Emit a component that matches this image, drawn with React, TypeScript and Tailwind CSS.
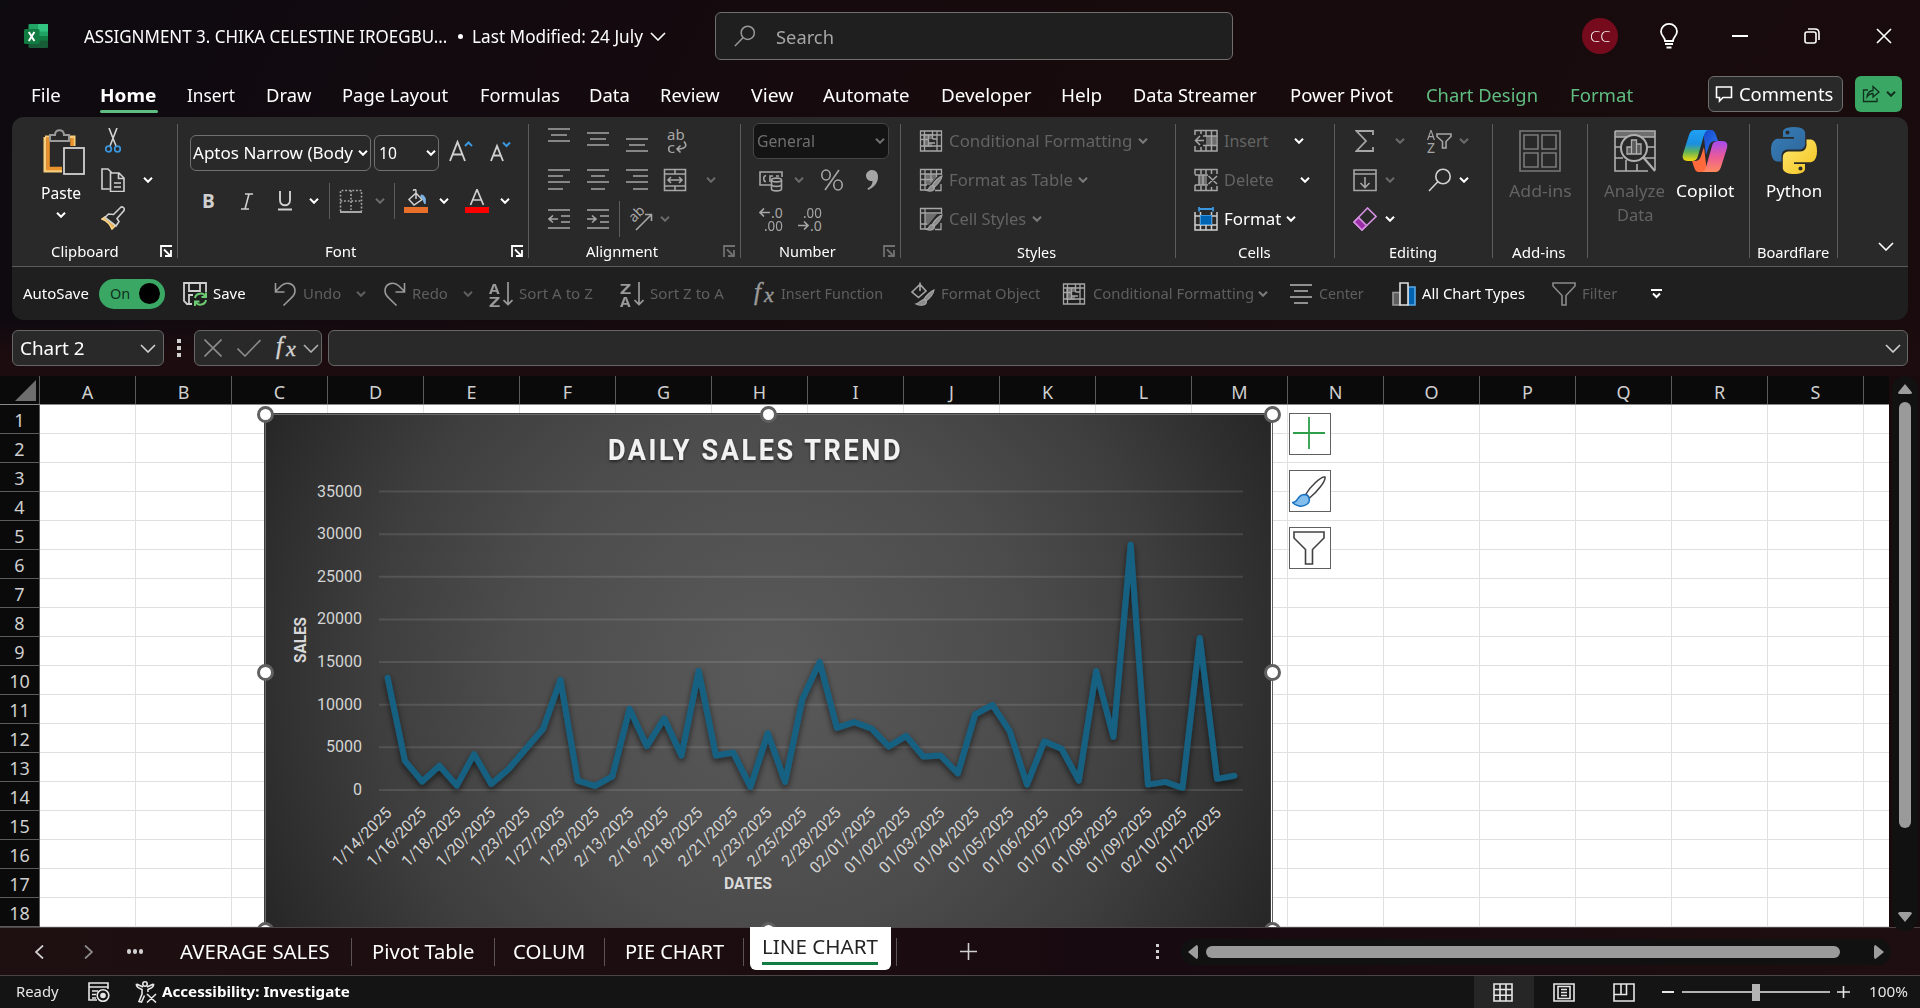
import { useLayoutEffect, useRef } from "react";
import type { ReactNode } from "react";

/* One line of text, squeezed or stretched horizontally to fill the width of its box. */
function Fit({ className = "", children }: { className?: string; children: ReactNode }) {
  const box = useRef<HTMLSpanElement>(null);
  const text = useRef<HTMLSpanElement>(null);
  useLayoutEffect(() => {
    if (!box.current || !text.current) return;
    const scale = box.current.clientWidth / text.current.offsetWidth;
    text.current.style.transform = `scaleX(${scale})`;
  }, []);
  return (
    <span ref={box} className={"block shrink-0 whitespace-nowrap " + className}>
      <span ref={text} className="inline-block origin-left">{children}</span>
    </span>
  );
}

function Svg({ className, vb = "0 0 24 24", children }: { className: string; vb?: string; children: ReactNode }) {
  return (
    <svg className={"block shrink-0 " + className} viewBox={vb} fill="none" stroke="currentColor" strokeWidth="1.6">
      {children}
    </svg>
  );
}

/* Small 10px drop-down arrow */
function Chev({ className = "" }: { className?: string }) {
  return (
    <svg className={"block h-[6px] w-[10px] shrink-0 " + className} viewBox="0 0 10 6" fill="none" stroke="currentColor" strokeWidth="2">
      <path d="M1 0.8 L5 4.8 L9 0.8" />
    </svg>
  );
}

/* Wide, thin arrow */
function BigChev({ className = "" }: { className?: string }) {
  return (
    <svg className={"block h-[9px] w-[16px] shrink-0 " + className} viewBox="0 0 16 9" fill="none" stroke="currentColor" strokeWidth="1.6">
      <path d="M1 1 L8 8 L15 1" />
    </svg>
  );
}

const Sep = () => <div className="mt-[7px] h-[134px] w-px shrink-0 bg-[#5c5c5c]" />;

function Launcher({ className }: { className: string }) {
  return (
    <Svg className={"h-[12px] w-[12px] " + className} vb="0 0 12 12">
      <path d="M1 12 V1 H12 M4 4.5 L10 10.5 M11 5 V11 H5" strokeWidth="1.8" />
    </Svg>
  );
}

/* ---------- icons ---------- */

const ExcelLogo = () => (
  <svg className="block h-6 w-6 shrink-0" viewBox="0 0 24 24">
    <rect x="4.5" y="0" width="10" height="8" rx="1" fill="#21a366" />
    <rect x="14" y="0" width="10" height="8" fill="#33c481" />
    <rect x="4.5" y="7" width="10" height="10" fill="#107c41" />
    <rect x="15" y="7.5" width="9" height="5" fill="#21a366" />
    <rect x="15" y="12" width="9" height="5" fill="#107c41" />
    <rect x="4.5" y="16.5" width="19.5" height="7.5" rx="1" fill="#185c37" />
    <rect x="0" y="5" width="15.5" height="15" rx="1.5" fill="#107c41" />
    <path d="M4.8 8 L10.4 17 M10.4 8 L4.8 17" stroke="#fff" strokeWidth="2" />
  </svg>
);

const CondIcon = ({ className = "" }: { className?: string }) => (
  <Svg className={"h-6 w-6 " + className}>
    <path d="M4 5 h10 v5 h-4 v4 h3 v4 h-9z" fill="#6e6e6e" stroke="none" />
    <path d="M1.5 2 H22.5 V22 H1.5z M1.5 6 H22.5 M1.5 10.5 H9 M1.5 17 H22.5 M5.5 2 V22 M9.5 6 V17 M13.5 2 V10 M18 2 V22 M13.5 10 H18 M9.5 14 H16" strokeWidth="1.3" />
  </Svg>
);
const TableIcon = ({ cell = false }: { cell?: boolean }) => (
  <Svg className="h-6 w-6">
    <path d={cell ? "M6 7 H18 L9 18 H6z" : "M6 6 H18 V9 L11 17 H6z"} fill="#6e6e6e" stroke="none" />
    <path d={cell ? "M22.5 7 V1.5 H1.5 V22 H9 M1.5 6 H22 M6 1.5 V22 M1.5 17 H8" : "M22.5 7 V1.5 H1.5 V22 H8 M1.5 6 H22 M6 1.5 V22 M1.5 11.5 H14 M1.5 17 H8 M12 2 V14 M17.5 2 V9"} strokeWidth="1.3" />
    <path d="M23 8 C20 9 15 14 13.5 17 L15.5 19 C19 16 22.5 11 23 8z M13 17.5 C10 17.5 11 21 7.5 22.5 C12 24 16 22.5 15.3 19.3z" fill="#8c8c8c" strokeWidth="1.2" />
    <path d="M22 16 V22.5 H16" strokeWidth="1.3" />
  </Svg>
);

const Lines = ({ rows, className }: { rows: [number, number, number][]; className: string }) => (
  <Svg className={"h-[26px] w-[22px] " + className} vb="0 0 22 26">
    {rows.map(([y, a, b]) => (
      <path key={y} d={`M${a} ${y} H${b}`} strokeWidth="1.7" />
    ))}
  </Svg>
);

const SortIcon = ({ a, b, className }: { a: string; b: string; className: string }) => (
  <div className={"flex h-6 w-6 shrink-0 text-[#9a9a9a] " + className}>
    <div className="flex w-[11px] flex-col text-[14px] font-bold leading-[13px]">
      <Fit className="w-[11px]">{a}</Fit>
      <Fit className="w-[11px]">{b}</Fit>
    </div>
    <Svg className="ml-[3px] h-6 w-[10px]" vb="0 0 10 24">
      <path d="M5 0 V22 M0.500 18 L5 22.500 L9.500 18" strokeWidth="1.7" />
    </Svg>
  </div>
);

const Fx = ({ className }: { className: string }) => (
  <svg className={"block h-[26px] w-[24px] shrink-0 overflow-visible " + className} viewBox="0 0 24 26" fill="currentColor" stroke="currentColor" strokeWidth="0.4">
    <text x="2" y="19" fontSize="25" fontStyle="italic" fontFamily="Liberation Serif">f</text>
    <text x="12" y="21" fontSize="22" fontStyle="italic" fontFamily="Liberation Serif">x</text>
  </svg>
);

const Mag = ({ className }: { className: string }) => (
  <Svg className={"h-6 w-6 " + className}>
    <circle cx="15" cy="8.5" r="7.2" />
    <path d="M9.8 13.8 L1 23" />
  </Svg>
);

/* ---------- title bar ---------- */

function TitleBar() {
  return (
    <div className="flex h-[72px] items-center text-[18px] text-white">
      <div className="ml-6"><ExcelLogo /></div>
      <Fit className="ml-9 w-[363px]">ASSIGNMENT 3. CHIKA CELESTINE IROEGBU...</Fit>
      <div className="ml-[11px] h-[5px] w-[5px] rounded-full bg-white" />
      <Fit className="ml-[9px] w-[171px]">Last Modified: 24 July</Fit>
      <BigChev className="ml-[7px]" />
      <div className="ml-[49px] flex h-[48px] w-[518px] shrink-0 items-center rounded-md border border-[#6f6f6f] bg-[#1f1f1f]">
        <Mag className="ml-[18px] h-[22px] w-[22px] text-[#9a9a9a]" />
        <Fit className="ml-[20px] mt-[2px] w-[58px] text-[#a6a6a6]">Search</Fit>
      </div>
      <div className="ml-[349px] flex h-9 w-9 items-center justify-center rounded-full bg-[#750b1c] font-['Open_Sans'] text-[14px] font-light">
        <Fit className="w-[20px]">CC</Fit>
      </div>
      <Svg className="ml-[42px] h-[26px] w-[18px]" vb="0 0 18 26">
        <path d="M5 18 C5 14 1 13 1 8.5 A8 7.6 0 0 1 17 8.5 C17 13 13 14 13 18z M5 21 H13 M6.5 24.5 H11.5" strokeWidth="1.8" />
      </Svg>
      <div className="ml-[54px] h-[2px] w-[16px] bg-white" />
      <Svg className="ml-[56px] h-4 w-4" vb="0 0 16 16">
        <rect x="1" y="4" width="11" height="11" rx="2" />
        <path d="M4 1 H11 Q15 1 15 5 V12" />
      </Svg>
      <Svg className="ml-[56px] h-4 w-4" vb="0 0 16 16">
        <path d="M1 1 L15 15 M15 1 L1 15" />
      </Svg>
    </div>
  );
}

function RibbonTabs() {
  return (
    <div className="flex h-[45px] items-center pb-[2px] text-[18px] leading-[36px] text-white">
      <Fit className="ml-[31px] mt-[3px] w-[30px]">File</Fit>
      <div className="ml-[39px] mt-[3px] flex h-[36px] w-[58px] shrink-0 flex-col">
        <Fit className="h-[33px] w-[56px] font-bold">Home</Fit>
        <div className="h-[3px] w-[58px] rounded bg-[#60bd82]" />
      </div>
      <Fit className="ml-[29px] mt-[3px] w-[48px]">Insert</Fit>
      <Fit className="ml-[31px] mt-[3px] w-[45px]">Draw</Fit>
      <Fit className="ml-[31px] mt-[3px] w-[106px]">Page Layout</Fit>
      <Fit className="ml-[32px] mt-[3px] w-[80px]">Formulas</Fit>
      <Fit className="ml-[29px] mt-[3px] w-[41px]">Data</Fit>
      <Fit className="ml-[30px] mt-[3px] w-[60px]">Review</Fit>
      <Fit className="ml-[31px] mt-[3px] w-[42px]">View</Fit>
      <Fit className="ml-[30px] mt-[3px] w-[87px]">Automate</Fit>
      <Fit className="ml-[31px] mt-[3px] w-[90px]">Developer</Fit>
      <Fit className="ml-[30px] mt-[3px] w-[41px]">Help</Fit>
      <Fit className="ml-[31px] mt-[3px] w-[124px]">Data Streamer</Fit>
      <Fit className="ml-[33px] mt-[3px] w-[103px]">Power Pivot</Fit>
      <Fit className="ml-[33px] mt-[3px] w-[112px] text-[#60bd82]">Chart Design</Fit>
      <Fit className="ml-[32px] mt-[3px] w-[63px] text-[#60bd82]">Format</Fit>
      <div className="ml-[75px] flex h-[36px] w-[135px] shrink-0 items-center rounded-md border border-[#6f6f6f] bg-[#292929]">
        <Svg className="ml-[6px] h-[18px] w-[18px]" vb="0 0 18 18">
          <path d="M1.5 2 H16.5 V12.5 H8 L4.5 16 V12.5 H1.5z" />
        </Svg>
        <Fit className="ml-[6px] w-[94px]">Comments</Fit>
      </div>
      <div className="ml-[12px] flex h-[36px] w-[47px] shrink-0 items-center rounded-md bg-[#3aa864] text-[#10301d]">
        <Svg className="ml-[7px] h-[18px] w-[18px]" vb="0 0 18 18">
          <path d="M6 5 H1.5 V16.5 H15 V13 M5 12 C5 8 8 5.5 11 5.5 V1.5 L17 7 L11 12 V8.5 C8 8.5 6.5 9.5 5 12z" strokeWidth="1.3" />
        </Svg>
        <Chev className="ml-[6px]" />
      </div>
    </div>
  );
}

/* ---------- ribbon groups ---------- */

const rowCls = "flex h-[39px] items-center";
const groupCls = "flex shrink-0 flex-col pt-[4px] text-[16px]";
const labelCls = "flex h-[26px] items-center text-[14px] text-white";

function ClipboardGroup() {
  return (
    <div className={groupCls + " w-[165px]"}>
      <div className="flex h-[117px]">
        <div className="ml-[28px] flex w-[42px] flex-col items-center text-white">
          <svg className="ml-[6px] mt-[8px] block h-[46px] w-[42px]" viewBox="0 0 42 46" fill="none">
            <path d="M2 8 H31 V17 M19 42 H2 V8" stroke="#f6ce7c" strokeWidth="3" />
            <path d="M5 8 V39.5 H19 M29 9 V17" stroke="#e8912d" strokeWidth="3.6" />
            <path d="M7 12 V6 H12 C12 -0.5 21 -0.5 21 6 H26 V12z" fill="#292929" stroke="#9a9a9a" strokeWidth="2" />
            <rect x="21" y="19" width="20" height="26" fill="#292929" stroke="#d0d0d0" strokeWidth="1.8" />
          </svg>
          <Fit className="mt-[6px] w-[40px] leading-6">Paste</Fit>
          <Chev className="mt-[7px]" />
        </div>
        <div className="ml-[19px] flex w-[60px] flex-col">
          <div className={rowCls}>
            <Svg className="ml-[4px] h-[25px] w-[16px]" vb="0 0 16 25">
              <path d="M4 0 L11 18 M12 0 L5 18" stroke="#d4d4d4" />
              <circle cx="3.5" cy="21" r="2.8" stroke="#3a96dd" strokeWidth="1.8" />
              <circle cx="12.5" cy="21" r="2.8" stroke="#3a96dd" strokeWidth="1.8" />
            </Svg>
          </div>
          <div className={rowCls}>
            <Svg className="h-6 w-6 text-[#d0d0d0]">
              <path d="M8.5 21 H1 V1 H7 L11 5 M9.5 5 H18 L23 10 V23.5 H9.5z M17.5 5 V10.5 H23 M13 15 H20 M13 19 H20" />
            </Svg>
            <Chev className="ml-[18px] text-white" />
          </div>
          <div className={rowCls + " -mt-px"}>
            <Svg className="h-6 w-6">
              <path d="M4 11 L1 13 C6 15 9 18 11 23 L16 18z" fill="#e8b04a" stroke="#f6d48c" />
              <path d="M7.5 8 L4 11.5 L15 20 L18 15.5 L16 12.5 L23 4.5 C24 2 21.5 0 19.5 1.5 L12.5 8.5z" fill="#292929" stroke="#d0d0d0" />
            </Svg>
          </div>
        </div>
      </div>
      <div className={labelCls}>
        <Fit className="ml-[39px] w-[68px]">Clipboard</Fit>
        <Launcher className="ml-[41px]" />
      </div>
    </div>
  );
}

function FontGroup() {
  return (
    <div className={groupCls + " w-[350px] text-[#d0d0d0]"}>
      <div className="mt-[14px] flex h-[36px] items-center text-[16.5px]">
        <div className="ml-[12px] flex h-[36px] w-[181px] items-center rounded-md border border-[#707070] text-white">
          <Fit className="ml-[2px] w-[160px]">Aptos Narrow (Body</Fit>
          <Chev className="ml-[5px]" />
        </div>
        <div className="ml-[3px] flex h-[36px] w-[65px] items-center rounded-md border border-[#707070] text-white">
          <Fit className="ml-[4px] w-[18px]">10</Fit>
          <Chev className="ml-[29px]" />
        </div>
        <Svg className="ml-[10px] h-[26px] w-[24px]" vb="0 0 24 26">
          <path d="M1 21 L8.5 2 L16 21 M3.7 14.500 H13.3" strokeWidth="1.9" />
          <path d="M16 6 L19.5 2.5 L23 6" stroke="#3a96dd" strokeWidth="2" />
        </Svg>
        <Svg className="ml-[17px] h-[26px] w-[24px]" vb="0 0 24 26">
          <path d="M1 21 L7 6 L13 21 M3.3 15.500 H10.7" strokeWidth="1.9" />
          <path d="M13 2.5 L16.500 6 L20 2.5" stroke="#3a96dd" strokeWidth="2" />
        </Svg>
      </div>
      <div className="mt-[12px] flex h-[36px] items-center">
        <span className="ml-[24px] w-[12px] font-['Open_Sans'] text-[19px] font-bold">B</span>
        <Svg className="ml-[27px] h-[17px] w-[12px]" vb="0 0 12 17">
          <path d="M4 1 H12 M0 16 H8 M8 1 L4 16" />
        </Svg>
        <Svg className="ml-[24px] h-[20px] w-[16px]" vb="0 0 16 20">
          <path d="M3 0 V9 C3 16 13 16 13 9 V0 M1 18.5 H15" strokeWidth="1.9" />
        </Svg>
        <Chev className="ml-[16px] text-white" />
        <div className="ml-[10px] h-[36px] w-px bg-[#5c5c5c]" />
        <Svg className="ml-[9px] h-6 w-6 text-[#a8a8a8]">
          <path d="M1.5 22 V1.5 H22.5 V22 M12 1.5 V21 M1.5 12 H22.5" strokeDasharray="1.8 1.8" />
          <path d="M1 23 H23" strokeWidth="2" />
        </Svg>
        <Chev className="ml-[12px] text-[#6a6a6a]" />
        <div className="ml-[9px] h-[36px] w-px bg-[#5c5c5c]" />
        <Svg className="ml-[9px] h-6 w-6">
          <path d="M5 10.5 L12 4 L18 10.5 L10 16z M12 10 V2 C12 0 9.5 0 9.5 2" strokeWidth="1.5" />
          <path d="M17 6 C21 6 22 10 21 15 C19 13 20 9 17 8z" fill="#7fb6ea" stroke="#7fb6ea" strokeWidth="1" />
          <rect x="0" y="18" width="24" height="6" fill="#e8702a" stroke="none" />
        </Svg>
        <Chev className="ml-[11px] text-white" />
        <Svg className="ml-[16px] h-6 w-6">
          <path d="M5.5 16 L12 0.5 L18.5 16 M7.8 11 H16.2" strokeWidth="1.7" />
          <rect x="0" y="18" width="24" height="6" fill="#ff0000" stroke="none" />
        </Svg>
        <Chev className="ml-[11px] text-white" />
      </div>
      <div className={labelCls + " mt-[19px]"}>
        <Fit className="ml-[147px] w-[31px]">Font</Fit>
        <Launcher className="ml-[155px]" />
      </div>
    </div>
  );
}

function AlignmentGroup() {
  return (
    <div className={groupCls + " w-[211px] text-[#a6a6a6]"}>
      <div className={rowCls}>
        <Lines className="ml-[19px]" rows={[[1, 0, 22], [7, 3, 19], [13, 0, 22]]} />
        <Lines className="ml-[17px]" rows={[[5, 0, 22], [11, 3, 19], [17, 0, 22]]} />
        <Lines className="ml-[17px]" rows={[[11, 0, 22], [17, 3, 19], [23, 0, 22]]} />
        <div className="ml-[19px] flex h-[26px] w-[20px] shrink-0 flex-col text-[15px] leading-[13px]">
          <Fit className="w-[18px]">ab</Fit>
          <div className="flex">
            <Fit className="w-[8px]">c</Fit>
            <Svg className="h-[13px] w-[12px]" vb="0 0 12 13">
              <path d="M9 0.500 C13 5 10 8 2 8 M5.500 4.500 L2 8 L5.500 11.500" />
            </Svg>
          </div>
        </div>
      </div>
      <div className={rowCls}>
        <Lines className="ml-[19px]" rows={[[3, 0, 22], [9, 0, 15], [15, 0, 22], [22, 0, 15]]} />
        <Lines className="ml-[17px]" rows={[[3, 0, 22], [9, 4, 18], [15, 0, 22], [22, 4, 18]]} />
        <Lines className="ml-[17px]" rows={[[3, 0, 22], [9, 7, 22], [15, 0, 22], [22, 7, 22]]} />
        <Svg className="ml-[15px] h-6 w-6">
          <path d="M1.5 1.5 H22.5 V22.5 H1.5z M1.5 6 H22.5 M1.5 18 H22.5 M12 1.5 V6 M12 18 V22.5 M5 12 H19 M8 9 L5 12 L8 15 M16 9 L19 12 L16 15" />
        </Svg>
        <Chev className="ml-[19px] text-[#6a6a6a]" />
      </div>
      <div className={rowCls}>
        <Svg className="ml-[19px] h-[26px] w-[22px]" vb="0 0 22 26">
          <path d="M0 4 H22 M13 10 H22 M13 16 H22 M0 22 H22 M10 13 H1 M5 9.5 L1 13 L5 16.5" />
        </Svg>
        <Svg className="ml-[17px] h-[26px] w-[22px]" vb="0 0 22 26">
          <path d="M0 4 H22 M13 10 H22 M13 16 H22 M0 22 H22 M0 13 H9 M5 9.5 L9 13 L5 16.5" />
        </Svg>
        <div className="ml-[10px] h-[36px] w-px bg-[#5c5c5c]" />
        <svg className="ml-[8px] block h-6 w-6 shrink-0 overflow-visible" viewBox="0 0 24 24" fill="none" stroke="currentColor" strokeWidth="1.6">
          <text transform="translate(6 16) rotate(-45)" x="0" y="0" fontSize="14" fontFamily="Noto Sans" fill="currentColor" stroke="none">ab</text>
          <path d="M8 23 L23 8 M17 7.5 H23.5 V14" />
        </svg>
        <Chev className="ml-[8px] text-[#6a6a6a]" />
      </div>
      <div className={labelCls}>
        <Fit className="ml-[57px] w-[72px]">Alignment</Fit>
        <Launcher className="ml-[65px] text-[#707070]" />
      </div>
    </div>
  );
}

function NumberGroup() {
  return (
    <div className={groupCls + " w-[159px] text-[#a6a6a6]"}>
      <div className={rowCls}>
        <div className="ml-[12px] flex h-[36px] w-[136px] items-center rounded-md border border-[#454545] bg-[#141414] text-[#6e6e6e]">
          <Fit className="ml-[3px] w-[58px]">General</Fit>
          <Chev className="ml-[60px]" />
        </div>
      </div>
      <div className={rowCls}>
        <Svg className="ml-[18px] h-6 w-6">
          <path d="M12 17 H1 V4 H23 V9 M7 8 C4 7 4 14 7 13.5 M11 14 V8 H14 M17 8 H20" />
          <path d="M12.5 12 C12.5 9.5 22.5 9.5 22.5 12 V21 C22.5 23.5 12.5 23.5 12.5 21z" fill="#292929" />
          <path d="M12.5 12 C12.5 14.5 22.5 14.5 22.5 12 M12.5 16.5 C12.5 19 22.5 19 22.5 16.5" />
        </Svg>
        <Chev className="ml-[11px] text-[#6a6a6a]" />
        <Svg className="ml-[16px] h-6 w-6">
          <ellipse cx="6" cy="7" rx="4.2" ry="5" />
          <ellipse cx="18" cy="17" rx="4.2" ry="5" />
          <path d="M19 2 L5 22" />
        </Svg>
        <Svg className="ml-[21px] h-[22px] w-[14px]" vb="0 0 14 22">
          <path d="M7 1 C11 1 13 4 13 8 C13 14 9 18.5 3 21 L2.5 19.5 C6 17.5 7.5 15 7.5 12 C4 12.5 1 10 1 6.5 C1 3.5 4 1 7 1z" fill="#a6a6a6" stroke="none" />
        </Svg>
      </div>
      <div className={rowCls}>
        <div className="ml-[18px] flex h-[26px] w-6 shrink-0 flex-col items-end text-[14px] leading-[13px]">
          <div className="flex h-[13px] items-center">
            <Svg className="mr-[1px] h-[9px] w-[11px]" vb="0 0 11 9"><path d="M11 4.500 H1 M5 0.500 L1 4.500 L5 8.500" /></Svg>
            <Fit className="w-[12px]">.0</Fit>
          </div>
          <Fit className="w-[19px]">.00</Fit>
        </div>
        <div className="ml-[15px] flex h-[26px] w-6 shrink-0 flex-col items-end text-[14px] leading-[13px]">
          <Fit className="w-[19px]">.00</Fit>
          <div className="flex h-[13px] items-center">
            <Svg className="mr-[1px] h-[9px] w-[11px]" vb="0 0 11 9"><path d="M0 4.500 H10 M6 0.500 L10 4.500 L6 8.500" /></Svg>
            <Fit className="w-[12px]">.0</Fit>
          </div>
        </div>
      </div>
      <div className={labelCls}>
        <Fit className="ml-[38px] w-[57px]">Number</Fit>
        <Launcher className="ml-[47px] text-[#707070]" />
      </div>
    </div>
  );
}

function StylesGroup() {
  return (
    <div className={groupCls + " w-[274px] text-[#a6a6a6]"}>
      <div className={rowCls}>
        <CondIcon className="ml-[18px]" />
        <Fit className="ml-[6px] w-[183px] text-[#636363]">Conditional Formatting</Fit>
        <Chev className="ml-[6px] text-[#7a7a7a]" />
      </div>
      <div className={rowCls}>
        <div className="ml-[18px]"><TableIcon /></div>
        <Fit className="ml-[6px] w-[124px] text-[#636363]">Format as Table</Fit>
        <Chev className="ml-[5px] text-[#7a7a7a]" />
      </div>
      <div className={rowCls}>
        <div className="ml-[18px]"><TableIcon cell /></div>
        <Fit className="ml-[6px] w-[77px] text-[#636363]">Cell Styles</Fit>
        <Chev className="ml-[6px] text-[#7a7a7a]" />
      </div>
      <div className={labelCls + " pt-[2px]"}>
        <Fit className="ml-[116px] w-[39px]">Styles</Fit>
      </div>
    </div>
  );
}

function CellsGroup() {
  return (
    <div className={groupCls + " w-[158px] text-[#a6a6a6]"}>
      <div className={rowCls}>
        <Svg className="ml-[18px] h-6 w-6">
          <rect x="12" y="7" width="10" height="9" fill="#6e6e6e" stroke="none" />
          <path d="M1 6 V1.5 H23 V22 H1 V17 M7 1.5 V5 M12 1.5 V7 M17.5 1.5 V22 M9 7 H23 M9 16.5 H23 M7 18 V22 M12 16 V22 M10 11.5 H1.5 M6 7 L1.5 11.5 L6 16" strokeWidth="1.5" />
        </Svg>
        <Fit className="ml-[6px] w-[44px] text-[#636363]">Insert</Fit>
        <Chev className="ml-[26px] text-white" />
      </div>
      <div className={rowCls}>
        <Svg className="ml-[18px] h-6 w-6">
          <rect x="5" y="7" width="8" height="10" fill="#6e6e6e" stroke="none" />
          <path d="M1 6.5 V1.5 H23 V6 M7 1.5 V6 M12 1.5 V6 M17.5 1.5 V6 M1 7 H14 M1 17 H14 M5 7 V17 M9 7 V17 M1 17 V22.5 H23 V18 M7 18 V22 M12 18 V22 M17.5 19 V22 M14.5 8 L23 16 M23 8 L14.5 16" strokeWidth="1.5" />
        </Svg>
        <Fit className="ml-[6px] w-[50px] text-[#636363]">Delete</Fit>
        <Chev className="ml-[26px] text-white" />
      </div>
      <div className={rowCls}>
        <Svg className="ml-[18px] h-6 w-6 text-[#d0d0d0]">
          <path d="M1 5 V23 H23 V5 M1 9 H23 M1 18 H23 M6.5 5 V23 M17.5 5 V23 M12 18 V23" strokeWidth="1.5" />
          <rect x="6.5" y="8.5" width="11" height="9" fill="#0063b1" stroke="#3a96dd" strokeWidth="1" />
          <path d="M5 2 H19 M5 0 V4.5 M19 0 V4.5" stroke="#3a96dd" strokeWidth="1.8" />
        </Svg>
        <Fit className="ml-[6px] w-[57px] text-white">Format</Fit>
        <Chev className="ml-[5px] text-white" />
      </div>
      <div className={labelCls + " pt-[2px]"}>
        <Fit className="ml-[62px] w-[33px]">Cells</Fit>
      </div>
    </div>
  );
}

function EditingGroup() {
  return (
    <div className={groupCls + " w-[157px] text-[#a6a6a6]"}>
      <div className={rowCls}>
        <Svg className="ml-[20px] h-[22px] w-[20px]" vb="0 0 20 22">
          <path d="M18 5 V1 H1.5 L11 11 L1.5 21 H18 V17" strokeWidth="1.8" />
        </Svg>
        <Chev className="ml-[20px] text-[#6a6a6a]" />
        <div className="ml-[22px] flex h-[26px] w-[9px] shrink-0 flex-col text-[14px] leading-[13px]">
          <Fit className="w-[8px]">A</Fit>
          <Fit className="w-[8px]">Z</Fit>
        </div>
        <Svg className="h-[16px] w-[16px]" vb="0 0 16 16">
          <path d="M1 1 H15 V3.500 L10 8.500 V15 H6.500 V8.500 L1 3.500z" />
        </Svg>
        <Chev className="ml-[7px] text-[#6a6a6a]" />
      </div>
      <div className={rowCls}>
        <Svg className="ml-[18px] h-6 w-6">
          <path d="M1 2 H23 V22.5 H1z M1 6 H23 M12 9 V19 M7.5 15 L12 19.5 L16.5 15" />
        </Svg>
        <Chev className="ml-[8px] text-[#6a6a6a]" />
        <Mag className="ml-[33px] text-[#d0d0d0]" />
        <Chev className="ml-[7px] text-white" />
      </div>
      <div className={rowCls}>
        <Svg className="ml-[18px] h-6 w-6 text-[#d48fe0]">
          <path d="M1 15 L14.5 1 L23 9.5 L9 23z" />
          <path d="M1 15 L5.5 10.5 L13.5 18.5 L9 23z" fill="#9b2fa8" />
        </Svg>
        <Chev className="ml-[8px] text-white" />
      </div>
      <div className={labelCls + " pt-[2px]"}>
        <Fit className="ml-[54px] w-[48px]">Editing</Fit>
      </div>
    </div>
  );
}

const CopilotIcon = () => (
  <svg className="block h-[44px] w-[46px]" viewBox="0 0 46 44">
    <defs>
      <linearGradient id="cpA" x1="0" y1="0" x2="0" y2="1">
        <stop offset="0" stopColor="#1fa2f5" /><stop offset=".45" stopColor="#1b8fe0" /><stop offset=".7" stopColor="#5fb35a" /><stop offset="1" stopColor="#f5d90a" />
      </linearGradient>
      <linearGradient id="cpB" x1="0" y1="0" x2="0" y2="1">
        <stop offset="0" stopColor="#a44bf0" /><stop offset=".5" stopColor="#ea5a9a" /><stop offset="1" stopColor="#ff8a5c" />
      </linearGradient>
      <linearGradient id="cpC" x1="0" y1="0" x2="1" y2="1">
        <stop offset="0" stopColor="#1746c9" /><stop offset="1" stopColor="#2b7cf0" />
      </linearGradient>
    </defs>
    <path d="M21 1 H29 C32 1 33 3 34 6 L36 12 C31 12 29 12 27 17 L24 26z" fill="url(#cpC)" />
    <path d="M25 43 H17 C14 43 13 41 12 38 L10 32 C15 32 17 32 19 27 L22 18z" fill="#ff6a3d" />
    <path d="M13 1 H27 C24 1 23 3 22 6 L16 27 C15 31 13 32 9 32 H6 C1 32 0 29 1 25 L7 6 C8.500 2 10 1 13 1z" fill="url(#cpA)" />
    <path d="M33 43 H19 C22 43 23 41 24 38 L30 17 C31 13 33 12 37 12 H40 C45 12 46 15 45 19 L39 38 C37.500 42 36 43 33 43z" fill="url(#cpB)" />
  </svg>
);

const PythonIcon = () => (
  <svg className="block h-[47px] w-[46px]" viewBox="0 0 46 47">
    <defs>
      <linearGradient id="pyB" x1="0" y1="0" x2="1" y2="1"><stop offset="0" stopColor="#387eb8" /><stop offset="1" stopColor="#2d659a" /></linearGradient>
      <linearGradient id="pyY" x1="0" y1="0" x2="1" y2="1"><stop offset="0" stopColor="#ffe873" /><stop offset="1" stopColor="#f3c31c" /></linearGradient>
    </defs>
    <path d="M22.700 0 C11.500 0 12 5 12 5 V10 H23 V11.700 H7.500 C7.500 11.700 0 10.800 0 23 C0 35 6.500 34.500 6.500 34.500 H10.500 V29 C10.500 29 10.300 22.500 17 22.500 H28 C28 22.500 34.200 22.600 34.200 16.500 V6.500 C34.200 6.500 35.200 0 22.700 0z M16.500 3.500 A2 2 0 1 1 16.500 7.600 A2 2 0 1 1 16.500 3.500z" fill="url(#pyB)" fillRule="evenodd" />
    <path d="M23.300 47 C34.500 47 34 42 34 42 V37 H23 V35.300 H38.500 C38.500 35.300 46 36.200 46 24 C46 12 39.500 12.500 39.500 12.500 H35.500 V18 C35.500 18 35.700 24.500 29 24.500 H18 C18 24.500 11.800 24.400 11.800 30.500 V40.500 C11.800 40.500 10.800 47 23.300 47z M29.500 43.500 A2 2 0 1 1 29.500 39.400 A2 2 0 1 1 29.500 43.500z" fill="url(#pyY)" fillRule="evenodd" />
  </svg>
);

function RightGroups() {
  return (
    <>
      <div className={groupCls + " w-[94px] text-[#636363]"}>
        <div className="flex h-[117px] flex-col items-center">
          <Svg className="mt-[9px] h-[42px] w-[42px] text-[#7a7a7a]" vb="0 0 42 42">
            <path d="M1 1 H41 V41 H1z M5 5 H19 V19 H5z M23 5 H37 V19 H23z M5 23 H19 V37 H5z M23 23 H37 V37 H23z" />
          </Svg>
          <Fit className="mt-[7px] w-[63px] leading-6">Add-ins</Fit>
        </div>
        <div className={labelCls + " pt-[2px]"}><Fit className="ml-[19px] w-[54px]">Add-ins</Fit></div>
      </div>
      <Sep />
      <div className={groupCls + " w-[161px] text-[#636363]"}>
        <div className="flex h-[117px]">
          <div className="ml-[16px] flex w-[61px] flex-col items-center">
            <Svg className="mt-[9px] h-[42px] w-[42px] text-[#b0b0b0]" vb="0 0 42 42">
              <path d="M1 1 H41 V7 H1z" fill="#6e6e6e" stroke="none" />
              <path d="M1 1 H41 V40 M1 1 V41 H34 M1 7 H41 M1 17 H7 M33 17 H41 M1 28 H9 M31 28 H41 M12 30 V41 M23 34 V41" />
              <circle cx="20" cy="18" r="13" fill="#292929" strokeWidth="2" />
              <path d="M13 24 V17 H17.500 V24z M17.500 24 V10 H22.500 V24z M22.500 24 V14 H27 V24z" fill="#5a5a5a" strokeWidth="1.300" />
              <path d="M29 27 L41 41" strokeWidth="2.200" />
            </Svg>
            <Fit className="mt-[7px] w-[61px] leading-6">Analyze</Fit>
            <Fit className="w-[36px] leading-6">Data</Fit>
          </div>
          <div className="ml-[11px] flex w-[58px] flex-col items-center text-white">
            <div className="mt-[8px]"><CopilotIcon /></div>
            <Fit className="mt-[6px] w-[58px] leading-6">Copilot</Fit>
          </div>
        </div>
      </div>
      <Sep />
      <div className={groupCls + " w-[87px] text-white"}>
        <div className="flex h-[117px] flex-col items-center">
          <div className="mt-[6px]"><PythonIcon /></div>
          <Fit className="mt-[5px] w-[56px] leading-6">Python</Fit>
        </div>
        <div className={labelCls + " pt-[2px]"}><Fit className="ml-[7px] w-[72px]">Boardflare</Fit></div>
      </div>
      <Sep />
      <BigChev className="ml-[40px] mt-[125px] text-white" />
    </>
  );
}

/* ---------- quick access toolbar ---------- */

function QuickAccess() {
  return (
    <div className="flex h-[53px] items-center text-[14.5px] text-[#5f5f5f]">
      <Fit className="ml-[11px] w-[66px] text-white">AutoSave</Fit>
      <div className="ml-[10px] flex h-[30px] w-[66px] shrink-0 items-center rounded-full bg-[#3aa864] text-[#10301d]">
        <Fit className="ml-[11px] w-[20px]">On</Fit>
        <div className="ml-[9px] h-[21px] w-[21px] rounded-full bg-black" />
      </div>
      <Svg className="ml-[18px] mt-px h-6 w-6 text-[#d0d0d0]">
        <path d="M9 22 H4 L1 19 V1 H23 V10 M6 1 V9 H17 V1 M6 21 V13 H10" strokeWidth="1.8" />
        <path d="M12 16 C13 11 20 10 22.500 14.500 M23 10.500 V15 H18.500 M23 18 C22 23.500 15 24 12.500 20 M12 24 V19.500 H16.500" stroke="#6ccb72" strokeWidth="2" />
      </Svg>
      <Fit className="ml-[6px] w-[33px] text-white">Save</Fit>
      <Svg className="ml-[28px] h-6 w-[23px] text-[#9a9a9a]" vb="0 0 23 24">
        <path d="M1.500 1 V10 H10.500 M1.500 9.500 L7 4 C12 -1 21 1 21 9 C21 13 19 14.500 9.500 23.500" />
      </Svg>
      <Fit className="ml-[6px] w-[38px]">Undo</Fit>
      <Chev className="ml-[15px]" />
      <Svg className="ml-[17px] h-6 w-[23px] text-[#9a9a9a]" vb="0 0 23 24">
        <path d="M21.500 1 V10 H12.500 M21.500 9.500 L16 4 C11 -1 2 1 2 9 C2 13 4 14.500 13.500 23.500" />
      </Svg>
      <Fit className="ml-[6px] w-[36px]">Redo</Fit>
      <Chev className="ml-[15px]" />
      <SortIcon a="A" b="Z" className="ml-[16px]" />
      <Fit className="ml-[6px] w-[74px]">Sort A to Z</Fit>
      <SortIcon a="Z" b="A" className="ml-[27px]" />
      <Fit className="ml-[6px] w-[74px]">Sort Z to A</Fit>
      <Fx className="ml-[28px] text-[#9a9a9a]" />
      <Fit className="ml-[5px] w-[102px]">Insert Function</Fit>
      <Svg className="ml-[28px] h-6 w-6 text-[#a6a6a6]">
        <path d="M1 10 L9 2.500 L15 9 L7.500 15.500z M9 9 V0.500" />
        <path d="M23 8 C20 9 15 14 13 17 L15 19 C19 16 22.500 11 23 8z M13 17.500 C10 17.500 9 21 5 22 C10 24.500 16 23 15.300 19.300z" fill="#8c8c8c" strokeWidth="1.200" />
      </Svg>
      <Fit className="ml-[6px] w-[99px]">Format Object</Fit>
      <CondIcon className="ml-[22px] text-[#a6a6a6]" />
      <Fit className="ml-[7px] w-[161px]">Conditional Formatting</Fit>
      <Chev className="ml-[4px] text-[#7a7a7a]" />
      <Lines className="ml-[22px] text-[#a6a6a6]" rows={[[4, 0, 22], [10, 4, 18], [16, 0, 22], [22, 4, 18]]} />
      <Fit className="ml-[7px] w-[45px]">Center</Fit>
      <Svg className="ml-[28px] h-6 w-6">
        <path d="M1 10.500 H8 V23 H1z" fill="#5f5f5f" stroke="#9a9a9a" />
        <path d="M16 5 H23 V23 H16z" fill="#0063b1" stroke="#5aa9e6" />
        <path d="M8 1 H16 V23 H8z" fill="#1f1f1f" stroke="#e0e0e0" />
      </Svg>
      <Fit className="ml-[6px] w-[103px] text-white">All Chart Types</Fit>
      <Svg className="ml-[27px] h-6 w-6 text-[#8a8a8a]">
        <path d="M1 1 H23 V4 L14 13.500 V23 H10 V13.500 L1 4z" />
      </Svg>
      <Fit className="ml-[6px] w-[35px]">Filter</Fit>
      <Svg className="ml-[34px] h-[10px] w-[11px] text-white" vb="0 0 11 10">
        <path d="M0 1 H11 M2 4.500 L5.500 8 L9 4.500" strokeWidth="2" />
      </Svg>
    </div>
  );
}

function FormulaBar() {
  return (
    <div className="flex h-[56px] items-center bg-[linear-gradient(180deg,transparent,#1c0c0f_60%)] text-[18px] text-white">
      <div className="ml-3 flex h-[36px] w-[152px] shrink-0 items-center rounded-md border border-[#666] bg-[#292929]">
        <Fit className="ml-[7px] mt-px w-[65px]">Chart 2</Fit>
        <BigChev className="ml-[55px] text-[#d0d0d0]" />
      </div>
      <div className="ml-[13px] flex w-[4px] flex-col gap-[3px]">
        <div className="h-[4px] w-[4px] bg-[#d0d0d0]" /><div className="h-[4px] w-[4px] bg-[#d0d0d0]" /><div className="h-[4px] w-[4px] bg-[#d0d0d0]" />
      </div>
      <div className="ml-[13px] flex h-[36px] w-[128px] shrink-0 items-center rounded-md border border-[#666] bg-[#292929]">
        <Svg className="ml-[9px] h-[18px] w-[18px] text-[#8a8a8a]" vb="0 0 18 18"><path d="M0.500 0.500 L17.500 17.500 M17.500 0.500 L0.500 17.500" /></Svg>
        <Svg className="ml-[15px] h-[18px] w-[24px] text-[#8a8a8a]" vb="0 0 24 18"><path d="M0.500 9.500 L8 17 L23.500 1" /></Svg>
        <Fx className="ml-[13px] text-[#d0d0d0]" />
        <BigChev className="ml-[5px] text-[#b0b0b0]" />
      </div>
      <div className="ml-[6px] flex h-[36px] w-[1580px] shrink-0 items-center justify-end rounded-md border border-[#666] bg-[#292929] pr-[6px]">
        <BigChev className="text-[#d0d0d0]" />
      </div>
    </div>
  );
}

/* ---------- chart ---------- */

const SALES = [
  13160, 3409, 991, 2854, 515, 4202, 713, 2458, 4836, 7174, 12922, 1110, 476, 1586, 9513, 5153, 8403, 4043, 13952, 4043, 4400, 357, 6659, 951, 10663,
  15023, 7293, 7967, 7214, 5113, 6342, 3924, 4043, 1942, 8879, 9989, 6897, 634, 5708, 4836, 1110, 13952, 6223, 28777, 634, 951, 238, 17837, 1308, 1665,
];

const DATES = [
  "1/14/2025", "1/16/2025", "1/18/2025", "1/20/2025", "1/23/2025", "1/27/2025", "1/29/2025", "2/13/2025", "2/16/2025", "2/18/2025",
  "2/21/2025", "2/23/2025", "2/25/2025", "2/28/2025", "02/01/2025", "01/02/2025", "01/03/2025", "01/04/2025", "01/05/2025", "01/06/2025",
  "01/07/2025", "01/08/2025", "01/09/2025", "02/10/2025", "01/12/2025",
];

function SalesChart() {
  const x = (i: number) => 114 + 17.28 * (i + 0.5);
  const y = (v: number) => 377 - (v / 35000) * 298.4;
  const points = SALES.map((v, i) => `${x(i)},${y(v)}`).join(" ");
  return (
    <svg className="block h-[517px] w-[1007px]" viewBox="-1 0 1007 517" fontFamily="Roboto, sans-serif">
      <defs>
        <radialGradient id="chartBg" gradientUnits="userSpaceOnUse" cx="503" cy="258" r="565">
          <stop offset="0" stopColor="#5a5a5a" />
          <stop offset="0.450" stopColor="#4c4c4c" />
          <stop offset="0.700" stopColor="#3e3e3e" />
          <stop offset="1" stopColor="#262626" />
        </radialGradient>
        <filter id="lineShadow" x="-5%" y="-10%" width="110%" height="125%">
          <feDropShadow dx="0" dy="3" stdDeviation="3" floodColor="#000" floodOpacity="0.600" />
        </filter>
        <filter id="titleShadow" x="-5%" y="-20%" width="110%" height="150%">
          <feDropShadow dx="0" dy="2" stdDeviation="1.500" floodColor="#000" floodOpacity="0.500" />
        </filter>
      </defs>
      <rect x="-1" width="1007" height="517" fill="url(#chartBg)" />
      <rect x="-0.500" y="0.500" width="1006" height="516" fill="none" stroke="#3c3c3c" />
      <path d="M0 1.500 H1005 M0.500 1 V517" stroke="#6a6a6a" fill="none" />
      <text transform="translate(343 47) scale(0.900 1)" x="0" y="0" fontSize="30" fontWeight="700" fill="#f2f2f2" textLength="325" filter="url(#titleShadow)">DAILY SALES TREND</text>
      {[0, 5000, 10000, 15000, 20000, 25000, 30000, 35000].map((v) => (
        <g key={v}>
          <path d={`M114 ${y(v)} H978`} stroke="#fff" strokeOpacity="0.110" strokeWidth="2" />
          <text x="97" y={y(v) + 5} fontSize="16" fill="#d4d4d4" textAnchor="end">{v}</text>
        </g>
      ))}
      <polyline points={points} fill="none" stroke="#156082" strokeWidth="6" strokeLinecap="round" strokeLinejoin="round" filter="url(#lineShadow)" />
      {DATES.map((d, i) => (
        <text key={d + i} transform={`translate(${x(i * 2) + 5} ${401}) rotate(-45)`} fontSize="16" fill="#d4d4d4" textAnchor="end">{d}</text>
      ))}
      <text x="459" y="476" fontSize="16" fontWeight="700" fill="#d9d9d9" textLength="48" lengthAdjust="spacingAndGlyphs">DATES</text>
      <text transform="translate(41 250) rotate(-90)" fontSize="16" fontWeight="700" fill="#d9d9d9" textLength="46" lengthAdjust="spacingAndGlyphs">SALES</text>
    </svg>
  );
}

const handleCls = "absolute h-[17px] w-[17px] rounded-full border-[3.5px] border-[#606060] bg-white ";

/* ---------- sheet ---------- */

const COLS = [..."ABCDEFGHIJLKMNOPQRS"].sort();
const ROWS = Array.from({ length: 18 }, (_, i) => i + 1);

function Sheet() {
  return (
    <div className="flex h-[551px] bg-[#190b0d]">
      <div className="w-[1889px] shrink-0 bg-[#0a0a0a] text-[18px] text-[#cfcfcf]">
        <div className="flex h-[29px] border-b border-[#8a8a8a]">
          <div className="flex w-[40px] shrink-0 items-end justify-end border-r border-[#5c5c5c] pb-[3px] pr-[3px]">
            <Svg className="h-[21px] w-[21px]" vb="0 0 21 21"><path d="M21 0 V21 H0z" fill="#6e6e6e" stroke="none" /></Svg>
          </div>
          {COLS.map((c) => (
            <div key={c} className="flex w-[96px] shrink-0 items-center justify-center border-r border-[#5c5c5c] pt-[4px]">{c}</div>
          ))}
        </div>
        <div className="relative h-[522px] overflow-hidden">
          {ROWS.map((r) => (
            <div key={r} className="flex h-[29px]">
              <div className="flex w-[40px] shrink-0 items-center justify-center border-b border-r border-[#5c5c5c] pt-[2px]">{r}</div>
              {COLS.map((c) => (
                <div key={c} className="w-[96px] shrink-0 border-b border-r border-[#e0e0e0] bg-white" />
              ))}
              <div className="grow border-b border-[#e0e0e0] bg-white" />
            </div>
          ))}
          <div className="absolute left-[264px] top-[8px] w-[1009px] border-r border-[#606060] bg-white">
            <SalesChart />
            <div className={handleCls + "-left-[7px] -top-[7px]"} />
            <div className={handleCls + "left-[496px] -top-[7px]"} />
            <div className={handleCls + "left-[1000px] -top-[7px]"} />
            <div className={handleCls + "-left-[7px] top-[251px]"} />
            <div className={handleCls + "left-[1000px] top-[251px]"} />
            <div className={handleCls + "-left-[7px] top-[509px]"} />
            <div className={handleCls + "left-[496px] top-[509px]"} />
            <div className={handleCls + "left-[1000px] top-[509px]"} />
          </div>
          <div className="absolute left-[1289px] top-[8px] flex flex-col gap-[15px] text-[#404040]">
            <div className="flex h-[42px] w-[42px] border border-[#606060] bg-white">
              <Svg className="ml-[3px] mt-[3px] h-[32px] w-[32px]" vb="0 0 32 32">
                <path d="M0 16 H32 M16 0 V32" stroke="#2e9e4a" strokeWidth="1.800" />
              </Svg>
            </div>
            <div className="flex h-[42px] w-[42px] border border-[#606060] bg-white">
              <Svg className="ml-[2px] mt-[5px] h-[31px] w-[34px]" vb="0 0 34 31">
                <path d="M33 1 C29 0 18 11 14 18 L17.500 22 C25 16 34 5 33 1z" strokeWidth="1.500" />
                <path d="M17 22 C19 27 13 31 7 30 C4 29.500 2 28.500 0.500 26.500 C6 27 5 19 12 18.500 C14.500 18.500 16.500 20 17 22z" fill="#83beec" stroke="#1a73c2" strokeWidth="1.500" />
              </Svg>
            </div>
            <div className="flex h-[42px] w-[42px] border border-[#606060] bg-white">
              <Svg className="ml-[3px] mt-[3px] h-[34px] w-[32px]" vb="0 0 32 34">
                <path d="M1 1 H31 V7 L19.500 18.500 V33 H12.500 V18.500 L1 7z" fill="#fafafa" />
              </Svg>
            </div>
          </div>
        </div>
      </div>
      <div className="ml-[3px] flex h-[555px] w-[26px] shrink-0 flex-col items-center rounded-full bg-[#111111]">
        <Svg className="mt-[8px] h-[10px] w-[14px]" vb="0 0 14 10"><path d="M7 0 L14 8.500 Q14 10 12 10 H2 Q0 10 0 8.500z" fill="#9d9d9d" stroke="none" /></Svg>
        <div className="mt-[8px] h-[426px] w-[12px] rounded-full bg-[#9a9a9a]" />
        <Svg className="mt-[84px] h-[10px] w-[14px]" vb="0 0 14 10"><path d="M7 10 L14 1.500 Q14 0 12 0 H2 Q0 0 0 1.500z" fill="#9d9d9d" stroke="none" /></Svg>
      </div>
    </div>
  );
}

function SheetTabs() {
  const sep = "h-[28px] w-px shrink-0 bg-[#5c5355] ";
  return (
    <div className="flex h-[48px] items-center border-t border-[#4a4446] bg-[linear-gradient(90deg,#1e0f11,#1c0d10_35%,#170a10_60%,#1e0e11)] text-[19px] text-white">
      <Svg className="ml-[35px] h-[14px] w-[9px] text-[#d0d0d0]" vb="0 0 9 14"><path d="M8 0.500 L1 7 L8 13.500" strokeWidth="1.800" /></Svg>
      <Svg className="ml-[40px] h-[14px] w-[9px] text-[#8a8a8a]" vb="0 0 9 14"><path d="M1 0.500 L8 7 L1 13.500" strokeWidth="1.800" /></Svg>
      <div className="ml-[34px] flex gap-[2px]">
        <div className="h-[5px] w-[4px] rounded-full bg-[#d0d0d0]" /><div className="h-[5px] w-[4px] rounded-full bg-[#d0d0d0]" /><div className="h-[5px] w-[4px] rounded-full bg-[#d0d0d0]" />
      </div>
      <Fit className="ml-[37px] mt-[2px] w-[150px]">AVERAGE SALES</Fit>
      <div className={sep + "ml-[21px]"} />
      <Fit className="ml-[20px] mt-[2px] w-[102px]">Pivot Table</Fit>
      <div className={sep + "ml-[20px]"} />
      <Fit className="ml-[18px] mt-[2px] w-[72px]">COLUM</Fit>
      <div className={sep + "ml-[19px]"} />
      <Fit className="ml-[20px] mt-[2px] w-[99px]">PIE CHART</Fit>
      <div className={sep + "ml-[19px]"} />
      <div className="-mt-px ml-[6px] flex h-[43px] w-[141px] shrink-0 flex-col self-start rounded-b-md bg-white text-[#242424]">
        <Fit className="ml-[12px] mt-[6px] h-[29px] w-[116px] leading-[29px]">LINE CHART</Fit>
        <div className="ml-[12px] h-[3px] w-[116px] bg-[#107c41]" />
      </div>
      <div className={sep + "ml-[5px]"} />
      <Svg className="ml-[63px] h-[17px] w-[17px] text-[#d0d0d0]" vb="0 0 17 17"><path d="M0 8.500 H17 M8.500 0 V17" /></Svg>
      <div className="ml-[179px] flex flex-col gap-[3px]">
        <div className="h-[3px] w-[3px] bg-[#d0d0d0]" /><div className="h-[3px] w-[3px] bg-[#d0d0d0]" /><div className="h-[3px] w-[3px] bg-[#d0d0d0]" />
      </div>
      <div className="ml-[22px] flex h-[26px] w-[710px] shrink-0 items-center rounded-full bg-[#111111]">
        <Svg className="ml-[7px] h-[14px] w-[10px]" vb="0 0 10 14"><path d="M0 7 L8.500 0 Q10 0 10 2 V12 Q10 14 8.500 14z" fill="#9d9d9d" stroke="none" /></Svg>
        <div className="ml-[8px] h-[12px] w-[634px] rounded-full bg-[#9a9a9a]" />
        <Svg className="ml-[34px] h-[14px] w-[10px]" vb="0 0 10 14"><path d="M10 7 L1.500 0 Q0 0 0 2 V12 Q0 14 1.500 14z" fill="#9d9d9d" stroke="none" /></Svg>
      </div>
    </div>
  );
}

function StatusBar() {
  return (
    <div className="flex h-[33px] items-center border-t border-[#4a4446] bg-[#141414] text-[14.5px] text-[#e6e6e6]">
      <Fit className="ml-4 w-[43px]">Ready</Fit>
      <Svg className="ml-[29px] h-[20px] w-[22px]" vb="0 0 22 20">
        <path d="M9 18 H1 V1 H20 V7 M1 5 H20 M4 9 H10 M4 12.500 H8 M4 16 H8" />
        <circle cx="15" cy="13.500" r="5.800" />
        <circle cx="15" cy="13.500" r="2.800" fill="currentColor" stroke="none" />
      </Svg>
      <Svg className="ml-[25px] h-[22px] w-[22px]" vb="0 0 22 22">
        <circle cx="10" cy="3" r="2.200" />
        <path d="M1.500 3 C1 5 3 7 7 8.500 V13 L4 20.500 L6.500 21 L9.500 14.500 M18.500 3 C19 5 17 7 13 8.500 V11 M1.500 3 L8 6 M18.500 3 L12 6 M12 13 L21 21.500 M21 13 L12 21.500" />
      </Svg>
      <Fit className="ml-[5px] w-[188px] font-bold text-white">Accessibility: Investigate</Fit>
      <div className="ml-[1124px] flex h-[32px] w-[60px] shrink-0 items-center bg-[#262626]">
        <Svg className="ml-[19px] h-[19px] w-[20px]" vb="0 0 20 19"><path d="M1 1 H19 V18 H1z M1 6.500 H19 M1 12.300 H19 M7 1 V18 M13 1 V18" /></Svg>
      </div>
      <Svg className="ml-[19px] h-[19px] w-[22px]" vb="0 0 22 19"><path d="M1 1 H21 V18 H1z M5 3.500 H17 V15.500 H5z M8 6.500 H14 M8 9.500 H14 M8 12.500 H14" /></Svg>
      <Svg className="ml-[38px] h-[19px] w-[22px]" vb="0 0 22 19"><path d="M1 1 H21 V18 H1z M8 1 V11 M1 11.500 H13.500 V1" /></Svg>
      <div className="ml-[27px] h-[1.5px] w-[12px] bg-[#e6e6e6]" />
      <div className="ml-[8px] flex h-[18px] w-[148px] shrink-0 items-center">
        <div className="h-[2px] w-[70px] bg-[#b3b3b3]" />
        <div className="h-[17px] w-[8px] bg-[#b3b3b3]" />
        <div className="h-[2px] w-[70px] bg-[#b3b3b3]" />
      </div>
      <Svg className="ml-[7px] h-[12px] w-[13px]" vb="0 0 13 12"><path d="M0 6 H13 M6.500 0 V12" /></Svg>
      <Fit className="ml-[19px] w-[39px]">100%</Fit>
    </div>
  );
}

export default function App() {
  return (
    <div className="h-[1008px] w-[1920px] overflow-hidden bg-[linear-gradient(115deg,#0d0a10_0%,#160a0e_35%,#180b0d_60%,#1a0c0d_100%)] font-['Noto_Sans',sans-serif]">
      <TitleBar />
      <RibbonTabs />
      <div className="ml-3 w-[1896px] overflow-hidden rounded-[12px] bg-[#1f1f1f]">
        <div className="flex h-[150px] border-b border-[#5c5c5c] bg-[#292929]">
          <ClipboardGroup />
          <Sep />
          <FontGroup />
          <Sep />
          <AlignmentGroup />
          <Sep />
          <NumberGroup />
          <Sep />
          <StylesGroup />
          <Sep />
          <CellsGroup />
          <Sep />
          <EditingGroup />
          <Sep />
          <RightGroups />
        </div>
        <QuickAccess />
      </div>
      <FormulaBar />
      <Sheet />
      <SheetTabs />
      <StatusBar />
    </div>
  );
}
